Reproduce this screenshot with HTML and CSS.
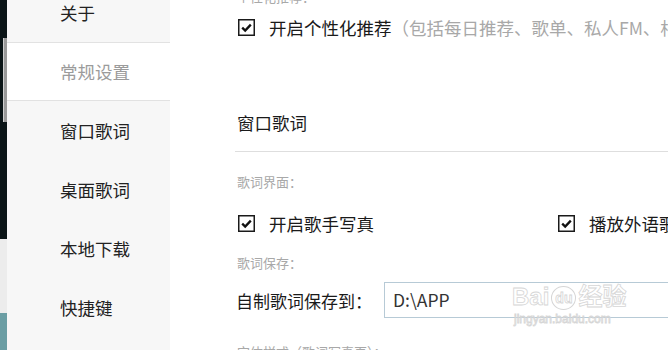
FILE: index.html
```html
<!DOCTYPE html>
<html lang="zh-CN">
<head>
    <meta charset="UTF-8">
    <title>设置</title>
    <link rel="stylesheet" href="styles.css">
</head>
<body>
    <div class="edge">
        <div class="edge-dark"><div class="thumb"></div></div>
        <div class="edge-light"></div>
        <div class="edge-teal"></div>
    </div>

    <ul class="side">
        <li>关于</li>
        <li class="active">常规设置</li>
        <li>窗口歌词</li>
        <li>桌面歌词</li>
        <li>本地下载</li>
        <li>快捷键</li>
    </ul>

    <div class="main">
        <div class="label">个性化推荐：</div>
        <div class="option">
            <span class="check"><svg width="17" height="17" viewBox="0 0 17 17"><rect x="0.75" y="0.75" width="15.5" height="15.5" fill="#fff" stroke="#1a1a1a" stroke-width="1.5"/><polyline points="4.2,8.6 7.2,11.6 12.8,5.6" fill="none" stroke="#111" stroke-width="2.3"/></svg></span>
            开启个性化推荐<span class="note">（包括每日推荐、歌单、私人FM、相似推荐）</span>
        </div>

        <h2 class="heading">窗口歌词</h2>

        <div class="label label-first">歌词界面：</div>
        <div class="option-row">
            <div class="option">
                <span class="check"><svg width="17" height="17" viewBox="0 0 17 17"><rect x="0.75" y="0.75" width="15.5" height="15.5" fill="#fff" stroke="#1a1a1a" stroke-width="1.5"/><polyline points="4.2,8.6 7.2,11.6 12.8,5.6" fill="none" stroke="#111" stroke-width="2.3"/></svg></span>
                开启歌手写真
            </div>
            <div class="option">
                <span class="check"><svg width="17" height="17" viewBox="0 0 17 17"><rect x="0.75" y="0.75" width="15.5" height="15.5" fill="#fff" stroke="#1a1a1a" stroke-width="1.5"/><polyline points="4.2,8.6 7.2,11.6 12.8,5.6" fill="none" stroke="#111" stroke-width="2.3"/></svg></span>
                播放外语歌曲时显示翻译
            </div>
        </div>

        <div class="label label-save">歌词保存：</div>
        <div class="path-row">
            <span class="path-label">自制歌词保存到：</span>
            <div class="path-box">D:\APP</div>
        </div>

        <div class="label label-last">字体样式（歌词写真页）：</div>
    </div>

    <div class="mark">
        <div class="mark-logo">Bai<span class="paw">du</span>经验</div>
        <div class="mark-url">jingyan.baidu.com</div>
    </div>
</body>
</html>
```

FILE: styles.css
```css
body {
    margin: 0;
    height: 350px;
    overflow: hidden;
    display: flex;
    font-family: "Noto Sans CJK SC", "Liberation Sans", sans-serif;
    color: #1a1a1a;
    background: #fff;
}

/* strip of the window behind, on the far left */
.edge {
    width: 7px;
    flex-shrink: 0;
    display: flex;
    flex-direction: column;
}
.edge-dark {
    height: 239px;
    background: #0b1517;
    padding-top: 38px;
    box-sizing: border-box;
}
.thumb {
    width: 4px;
    height: 84px;
    margin-left: 3px;
    background: #9a9a9a;
    border-left: 1px solid #d0d0d0;
}
.edge-light {
    height: 74px;
    background: #ececec;
}
.edge-teal {
    flex: 1;
    background: #6b9ea4;
}

.side {
    width: 163px;
    flex-shrink: 0;
    margin: 0;
    padding: 0;
    list-style: none;
    background: #f7f7f7;
    margin-top: -17px;
    height: 367px;
}
.side li {
    height: 59px;
    line-height: 59px;
    padding-left: 53px;
    font-size: 17.5px;
    color: #222;
}
.side li.active {
    background: #fff;
    color: #9b9b9b;
    box-shadow: inset 0 1px #e2e2e2, inset 0 -1px #e2e2e2;
}

.main {
    flex: 1;
    min-width: 0;
    padding-left: 65px;
    margin-top: -15px;
    white-space: nowrap;
    overflow: hidden;
}
.label {
    height: 24px;
    line-height: 24px;
    font-size: 13px;
    color: #a8a8a8;
    padding-left: 2px;
}
.option {
    height: 36px;
    display: flex;
    align-items: center;
    font-size: 17.5px;
    padding-left: 3px;
    flex-shrink: 0;
}
.check {
    display: flex;
    margin-right: 14px;
}
.note {
    color: #a8a8a8;
}
.heading {
    margin: 50px 0 0;
    height: 56px;
    line-height: 56px;
    font-size: 17.5px;
    font-weight: normal;
    padding-left: 2px;
    border-bottom: 1px solid #dedede;
}
.label-first {
    margin-top: 18px;
}
.option-row {
    display: flex;
    margin-top: 11px;
}
.option-row .option:first-child {
    width: 317px;
}
.label-save {
    margin-top: 10px;
}
.path-row {
    display: flex;
    align-items: center;
    margin-top: 7px;
    height: 36px;
    padding-left: 1px;
}
.path-label {
    width: 148px;
    flex-shrink: 0;
    font-size: 17px;
}
.path-box {
    flex: 1;
    height: 34px;
    line-height: 34px;
    border: 1px solid #b7cad6;
    border-right: none;
    padding-left: 8px;
    font-size: 17.5px;
    color: #333;
}
.label-last {
    margin-top: 22px;
}

/* watermark over the screenshot */
.mark {
    position: absolute;
    left: 512px;
    top: 282px;
    color: transparent;
    -webkit-text-stroke: 0.8px #d6d6d6;
    font-family: "Liberation Sans", "Noto Sans CJK SC", sans-serif;
}
.mark-logo {
    font-size: 24px;
    line-height: 30px;
    font-weight: bold;
}
.paw {
    display: inline-block;
    font-size: 14px;
    line-height: 18px;
    border: 1px solid #d6d6d6;
    border-radius: 50%;
    padding: 2px 3px;
    margin: 0 2px;
    vertical-align: 2px;
}
.mark-url {
    font-size: 12px;
    line-height: 14px;
    padding-left: 2px;
}
```
